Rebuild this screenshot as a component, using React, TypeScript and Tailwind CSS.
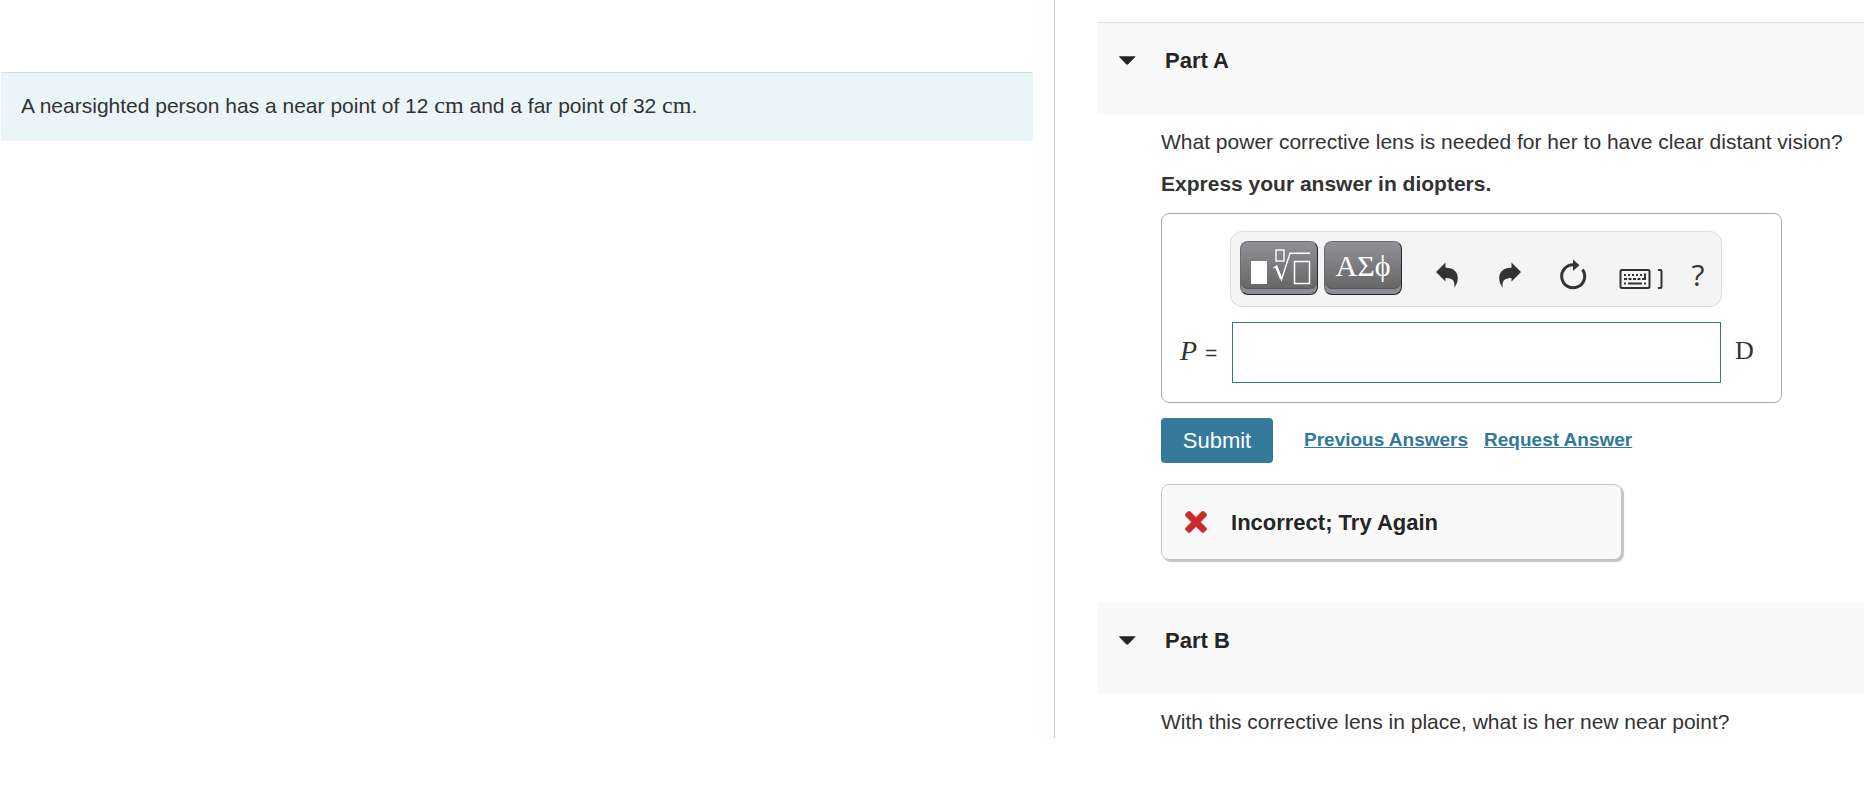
import React, { useState } from 'react';

const Unit: React.FC<{ children: React.ReactNode }> = ({ children }) => (
  <span className="font-['Liberation_Serif',serif] text-2xl leading-none">{children}</span>
);

interface PartHeaderProps {
  title: string;
  open: boolean;
  onToggle: () => void;
}

const PartHeader: React.FC<PartHeaderProps> = ({ title, open, onToggle }) => (
  <h2 className="bg-[#f9f9f9] pt-[22px] pb-[37px]">
    <button
      type="button"
      aria-expanded={open}
      onClick={onToggle}
      className="flex items-center gap-7 pl-5 text-[22px] leading-8 font-bold text-[#252525]"
    >
      <svg width="20" height="12" viewBox="0 0 20 12" aria-hidden="true">
        <path d="M2.500 1.200h15.500c.5 0 .6.5.2.9L11.200 9.300c-.6.6-1.4.6-2 0L2.300 2.100c-.4-.4-.3-.9.2-.9z" fill="#252525" />
      </svg>
      {title}
    </button>
  </h2>
);

const UndoIcon = () => (
  <svg width="24" height="28" viewBox="0 0 24 28" aria-hidden="true">
    <path d="M1 11L10.500 1.500v5.300C18.500 6.500 22.800 11 22.800 17c0 3.500-1.300 7-3.600 9.800 1.200-6.300-1.200-10-8.700-9.800v3.500z" fill="#333" />
  </svg>
);

const RedoIcon = () => (
  <svg width="24" height="28" viewBox="0 0 24 28" aria-hidden="true">
    <path d="M23 11L13.500 1.500v5.300C5.500 6.500 1.200 11 1.200 17c0 3.500 1.300 7 3.600 9.800-1.200-6.300 1.200-10 8.700-9.800v3.500z" fill="#333" />
  </svg>
);

const ResetIcon = () => (
  <svg width="28" height="32" viewBox="0 0 28 32" aria-hidden="true">
    <path d="M15 5.800A11.500 11.500 0 1 0 23.500 10.500" fill="none" stroke="#333" strokeWidth="3" />
    <path d="M14 .5l6.500 5.700-6.500 5.800z" fill="#333" />
  </svg>
);

const KeyboardIcon = () => (
  <svg width="44" height="22" viewBox="0 0 44 22" aria-hidden="true">
    <rect x="1.500" y="2" width="29" height="18" rx="1.500" fill="none" stroke="#333" strokeWidth="2" />
    <path d="M5 7h19" stroke="#333" strokeWidth="2" strokeDasharray="2 2" />
    <path d="M5 11h17" stroke="#333" strokeWidth="2" strokeDasharray="3 1.500" />
    <path d="M26 5.500V11h-3" fill="none" stroke="#333" strokeWidth="2" />
    <path d="M5 15.500h2M9 15.500h14M25 15.500h2" stroke="#333" strokeWidth="2" />
    <path d="M39 2h2.500q1 0 1 1v16q0 1-1 1H39" fill="none" stroke="#333" strokeWidth="2" />
  </svg>
);

const TemplateIcon = () => (
  <svg width="66" height="38" viewBox="-1 1 66 38" aria-hidden="true">
    <rect x="4" y="13" width="16" height="23" fill="#fff" />
    <rect x="29" y="2" width="8" height="11" fill="none" stroke="#fff" strokeWidth="1.400" />
    <path d="M26.500 20l3-2 5 13.500L43 5.300h20" fill="none" stroke="#fff" strokeWidth="1.400" />
    <path d="M29 18l5 12.500" stroke="#fff" strokeWidth="2.500" />
    <rect x="47.500" y="13.500" width="15" height="22" fill="none" stroke="#fff" strokeWidth="1.500" />
  </svg>
);

const CrossIcon = () => (
  <svg width="22" height="22" viewBox="0 0 22 22" aria-hidden="true">
    <path
      d="M5 .6L11 6.500 17 .6c.6-.6 1.200-.6 1.800 0l2.500 2.500c.6.6.6 1.200 0 1.800L15.400 11l5.900 6c.6.6.6 1.200 0 1.800l-2.500 2.500c-.6.6-1.200.6-1.800 0L11 15.400l-6 5.900c-.6.6-1.200.6-1.800 0L.7 18.800c-.6-.6-.6-1.200 0-1.800l5.900-6L.7 4.900c-.6-.6-.6-1.200 0-1.800L3.200.6c.6-.6 1.200-.6 1.800 0z"
      fill="#cb2a2d"
      stroke="#cb2a2d"
      strokeWidth=".8"
    />
  </svg>
);

const paletteButton =
  'flex h-[54px] w-[78px] items-center justify-center rounded-lg border border-[#6c6c70] border-r-[#28282c] border-b-[#28282c] bg-linear-to-b from-[#919198] to-[#626262] shadow-[inset_0_-5px_0_#8d8d96,inset_0_-6px_0_#55555a]';

const toolButton = 'flex w-[63px] items-center justify-center';

export default function App() {
  const [answer, setAnswer] = useState('');
  const [openA, setOpenA] = useState(true);
  const [openB, setOpenB] = useState(true);

  return (
    <div className="flex bg-white font-['Liberation_Sans',Arial,sans-serif] text-[21px] text-[#333]">
      <aside className="w-[56.6%] border-r border-[#b9cbdd] pt-[72px] pr-[21px] pl-px">
        <p className="border-t border-[#d9dddd] bg-[#eaf5f7] px-5 pt-[19px] pb-[21px] leading-7">
          A nearsighted person has a near point of 12 <Unit>cm</Unit> and a far point of 32 <Unit>cm</Unit>.
        </p>
      </aside>

      <main className="min-w-0 flex-1 pt-[22px] pl-[42px]">
        <section>
          <div className="border-t border-[#dcdcdc]">
            <PartHeader title="Part A" open={openA} onToggle={() => setOpenA(!openA)} />
          </div>
          {openA && (
            <div className="pt-3 pb-[43px] pl-16">
              <p className="leading-8">What power corrective lens is needed for her to have clear distant vision?</p>
              <p className="mt-2 leading-9 font-bold">Express your answer in diopters.</p>

              <div className="mt-[11px] w-[621px] max-w-full rounded-lg border border-[#a9a9a9] px-[18px] pt-[17px] pb-[19px]">
                <div className="mr-[41px] ml-[50px] flex h-[76px] items-start rounded-xl border border-[#dcdcdc] bg-[#f4f4f4] pt-[9px] pl-[9px]">
                  <div className="flex gap-1.5">
                    <button type="button" aria-label="Templates" className={paletteButton}>
                      <TemplateIcon />
                    </button>
                    <button
                      type="button"
                      aria-label="Symbols"
                      className={`${paletteButton} pb-1 font-['Liberation_Serif',serif] text-[30px] leading-none text-white`}
                    >
                      ΑΣϕ
                    </button>
                  </div>
                  <div className="flex items-center pt-[18px] pl-[13px]">
                    <button type="button" aria-label="Undo" className={toolButton}><UndoIcon /></button>
                    <button type="button" aria-label="Redo" className={toolButton}><RedoIcon /></button>
                    <button type="button" aria-label="Reset" className={toolButton}><ResetIcon /></button>
                    <button type="button" aria-label="Keyboard shortcuts" className="flex w-[74px] justify-center pt-2">
                      <KeyboardIcon />
                    </button>
                    <button type="button" aria-label="Help" className="w-10 font-['Open_Sans',sans-serif] text-[30px] leading-8">
                      ?
                    </button>
                  </div>
                </div>

                <div className="mt-[15px] flex items-center">
                  <label htmlFor="power" className="w-[52px] pb-1 whitespace-nowrap">
                    <span className="pr-0.5 font-['Liberation_Serif',serif] text-[28px] italic">P</span> =
                  </label>
                  <input
                    id="power"
                    value={answer}
                    onChange={(e) => setAnswer(e.target.value)}
                    className="h-[61px] min-w-0 flex-1 border border-[#31789b] px-3 outline-none"
                  />
                  <span className="w-[42px] pb-1 pl-3.5 font-['Liberation_Serif',serif] text-[26px]">D</span>
                </div>
              </div>

              <div className="mt-[15px] flex items-center">
                <button type="button" className="h-[45px] w-28 rounded-sm bg-[#35799b] text-[22px] text-white">
                  Submit
                </button>
                <a href="#previous" className="ml-[31px] text-[19px] font-bold text-[#31789b] underline">Previous Answers</a>
                <a href="#request" className="ml-4 text-[19px] font-bold text-[#31789b] underline">Request Answer</a>
              </div>

              <div className="mt-[21px] flex h-[76px] w-[461px] max-w-full items-center gap-6 rounded-lg border border-[#c4c4c4] bg-[#f9f9f9] px-[23px] text-[22px] font-bold text-[#252525] shadow-[2px_2px_1px_#c4c4c4]">
                <CrossIcon />
                Incorrect; Try Again
              </div>
            </div>
          )}
        </section>

        <section>
          <PartHeader title="Part B" open={openB} onToggle={() => setOpenB(!openB)} />
          {openB && (
            <div className="pt-3 pl-16">
              <p className="leading-8">With this corrective lens in place, what is her new near point?</p>
            </div>
          )}
        </section>
      </main>
    </div>
  );
}
